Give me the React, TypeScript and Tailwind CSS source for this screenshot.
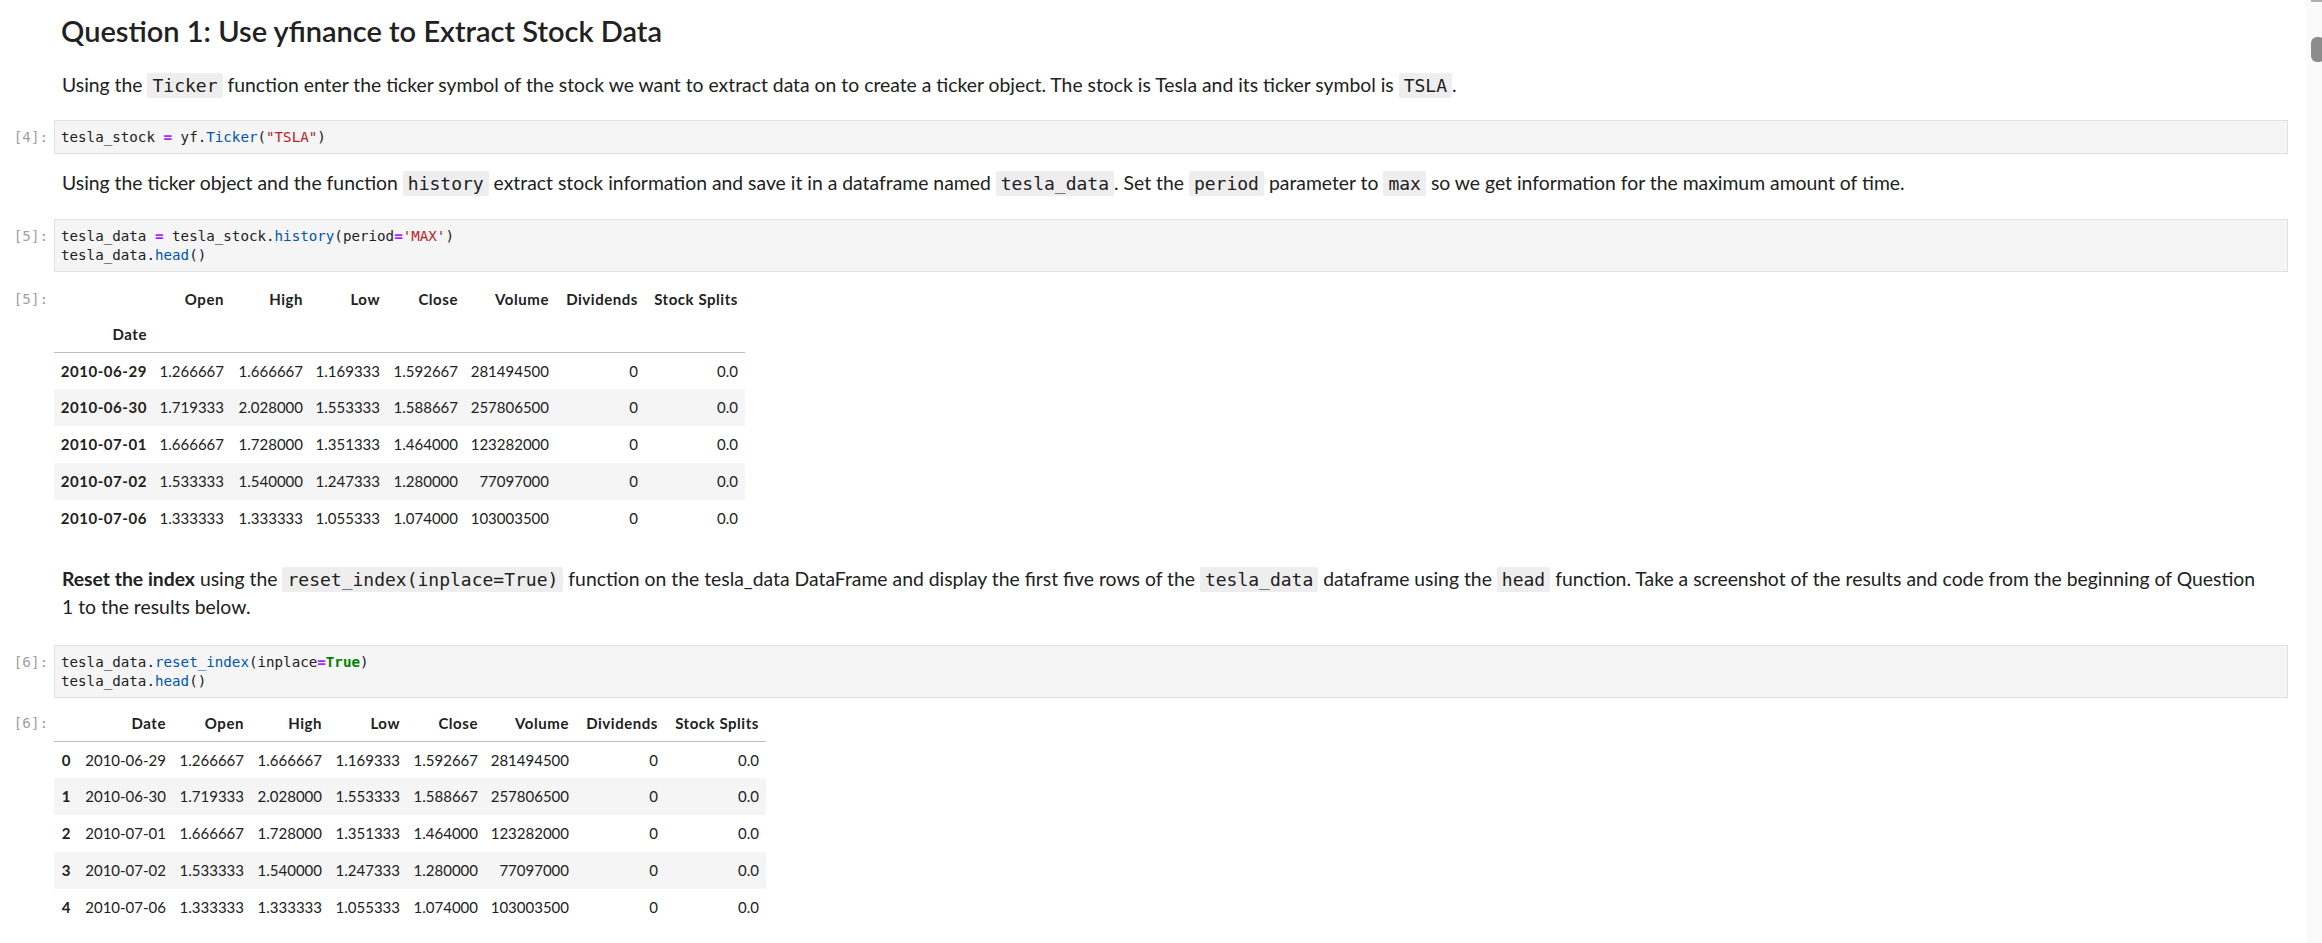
import React from "react";

type Tok = [string, string?];

const K = {
  op: "font-bold text-[#aa22ff]",
  fn: "text-[#0055aa]",
  str: "text-[#ba2121]",
  kw: "font-bold text-[#008000]",
};

function CodeLine({ toks }: { toks: Tok[] }) {
  return (
    <div className="h-[19px] whitespace-pre">
      {toks.map(([t, cls], i) => (
        <span key={i} className={cls}>
          {t}
        </span>
      ))}
    </div>
  );
}

function Prompt({ label, top }: { label?: string; top: string }) {
  return (
    <div
      className={`w-[54px] shrink-0 pr-[6px] text-right font-['DejaVu_Sans_Mono',monospace] text-[14.2px] leading-[19px] text-[#a0a0a0] ${top}`}
    >
      {label}
    </div>
  );
}

function CodeCell({ n, lines, mt }: { n: number; lines: Tok[][]; mt: string }) {
  return (
    <div className={`flex ${mt}`}>
      <Prompt label={`[${n}]:`} top="pt-[8px]" />
      <div className="flex-1 border border-[#e0e0e0] bg-[#f5f5f5] px-[6px] pt-[7px] pb-[6px] font-['DejaVu_Sans_Mono',monospace] text-[14.2px] leading-[19px] text-[#212121]">
        {lines.map((l, i) => (
          <CodeLine key={i} toks={l} />
        ))}
      </div>
    </div>
  );
}

// inline code inside markdown text
function C({ children }: { children: React.ReactNode }) {
  return (
    <code className="rounded-[2px] bg-[#eeeeee] px-[5px] py-[2px] font-['DejaVu_Sans_Mono',monospace] text-[18px] leading-none text-[#212121]">
      {children}
    </code>
  );
}

function Markdown({ children, mt }: { children: React.ReactNode; mt: string }) {
  return (
    <div className={`flex ${mt}`}>
      <div className="w-[54px] shrink-0" />
      <div className="min-w-0 flex-1 pl-[8px] text-[19.35px] leading-[28px] text-[#212121]">{children}</div>
    </div>
  );
}

const rows = [
  ["2010-06-29", "1.266667", "1.666667", "1.169333", "1.592667", "281494500", "0", "0.0"],
  ["2010-06-30", "1.719333", "2.028000", "1.553333", "1.588667", "257806500", "0", "0.0"],
  ["2010-07-01", "1.666667", "1.728000", "1.351333", "1.464000", "123282000", "0", "0.0"],
  ["2010-07-02", "1.533333", "1.540000", "1.247333", "1.280000", "77097000", "0", "0.0"],
  ["2010-07-06", "1.333333", "1.333333", "1.055333", "1.074000", "103003500", "0", "0.0"],
];

const cols = ["Open", "High", "Low", "Close", "Volume", "Dividends", "Stock Splits"];

const th = "pr-[7px] font-bold tracking-[0.55px]";

function IndexedTable() {
  const widths = ["w-[100px]", "w-[77px]", "w-[79px]", "w-[77px]", "w-[78px]", "w-[91px]", "w-[89px]", "w-[100px]"];
  return (
    <div className="mt-[9px] flex">
      <Prompt label="[5]:" top="pt-[9px]" />
      <table className="w-[691px] table-fixed border-collapse text-right text-[15px] text-[#212121]">
        <colgroup>
          {widths.map((w, i) => (
            <col key={i} className={w} />
          ))}
        </colgroup>
        <thead>
          <tr className="h-[36px]">
            <th />
            {cols.map((c) => (
              <th key={c} className={th}>
                {c}
              </th>
            ))}
          </tr>
          <tr className="h-[35px]">
            <th className={`border-b border-[#bdbdbd] ${th}`}>Date</th>
            {cols.map((c) => (
              <th key={c} className="border-b border-[#bdbdbd]" />
            ))}
          </tr>
        </thead>
        <tbody>
          {rows.map((r, i) => (
            <tr key={i} className={`h-[37px] ${i % 2 === 1 ? "bg-[#f5f5f5]" : ""}`}>
              <th className={th}>{r[0]}</th>
              {r.slice(1).map((v, j) => (
                <td key={j} className="pr-[7px]">
                  {v}
                </td>
              ))}
            </tr>
          ))}
        </tbody>
      </table>
    </div>
  );
}

function ResetTable() {
  const widths = ["w-[24px]", "w-[95px]", "w-[78px]", "w-[78px]", "w-[78px]", "w-[78px]", "w-[91px]", "w-[89px]", "w-[101px]"];
  return (
    <div className="mt-[8px] flex">
      <Prompt label="[6]:" top="pt-[8px]" />
      <table className="w-[712px] table-fixed border-collapse text-right text-[15px] text-[#212121]">
        <colgroup>
          {widths.map((w, i) => (
            <col key={i} className={w} />
          ))}
        </colgroup>
        <thead>
          <tr className="h-[35px]">
            <th className="border-b border-[#bdbdbd]" />
            {["Date", ...cols].map((c) => (
              <th key={c} className={`border-b border-[#bdbdbd] ${th}`}>
                {c}
              </th>
            ))}
          </tr>
        </thead>
        <tbody>
          {rows.map((r, i) => (
            <tr key={i} className={`h-[37px] ${i % 2 === 1 ? "bg-[#f5f5f5]" : ""}`}>
              <th className={th}>{i}</th>
              {r.map((v, j) => (
                <td key={j} className="pr-[7px]">
                  {v}
                </td>
              ))}
            </tr>
          ))}
        </tbody>
      </table>
    </div>
  );
}

export default function App() {
  return (
    <div className="flex h-[943px] w-full overflow-hidden bg-white font-['Lato',sans-serif] text-[#212121]">
      <main className="flex min-w-0 flex-1 flex-col pr-[18px]">
        <div className="flex pt-[14px]">
          <div className="w-[54px] shrink-0" />
          <h2 className="pl-[7px] text-[29px] leading-[34px] font-semibold">
            Question 1: Use yfinance to Extract Stock Data
          </h2>
        </div>

        <Markdown mt="mt-[23px]">
          Using the <C>Ticker</C> function enter the ticker symbol of the stock we want to extract data on to create a
          ticker object. The stock is Tesla and its ticker symbol is <C>TSLA</C>.
        </Markdown>

        <CodeCell
          n={4}
          mt="mt-[21px]"
          lines={[[["tesla_stock "], ["=", K.op], [" yf."], ["Ticker", K.fn], ["("], ['"TSLA"', K.str], [")"]]]}
        />

        <Markdown mt="mt-[15px]">
          Using the ticker object and the function <C>history</C> extract stock information and save it in a dataframe
          named <C>tesla_data</C>. Set the <C>period</C> parameter to <C>max</C> so we get information for the maximum
          amount of time.
        </Markdown>

        <CodeCell
          n={5}
          mt="mt-[22px]"
          lines={[
            [["tesla_data "], ["=", K.op], [" tesla_stock."], ["history", K.fn], ["(period"], ["=", K.op], ["'MAX'", K.str], [")"]],
            [["tesla_data."], ["head", K.fn], ["()"]],
          ]}
        />

        <IndexedTable />

        <Markdown mt="mt-[28px]">
          <strong className="font-bold">Reset the index</strong> using the <C>reset_index(inplace=True)</C> function on
          the tesla_data DataFrame and display the first five rows of the <C>tesla_data</C> dataframe using the{" "}
          <C>head</C> function. Take a screenshot of the results and code from the beginning of Question
          <br />1 to the results below.
        </Markdown>

        <CodeCell
          n={6}
          mt="mt-[24px]"
          lines={[
            [["tesla_data."], ["reset_index", K.fn], ["(inplace"], ["=", K.op], ["True", K.kw], [")"]],
            [["tesla_data."], ["head", K.fn], ["()"]],
          ]}
        />

        <ResetTable />
      </main>

      <div className="h-full w-[16px] shrink-0 overflow-hidden bg-[#fafafa]">
        <div className="ml-[5px] h-[2px] w-[11px] bg-[#b0b0b0]" />
        <div className="mt-[35px] ml-[5px] h-[25px] w-[14px] rounded-[6px] bg-[#8c8c8c]" />
      </div>
    </div>
  );
}
